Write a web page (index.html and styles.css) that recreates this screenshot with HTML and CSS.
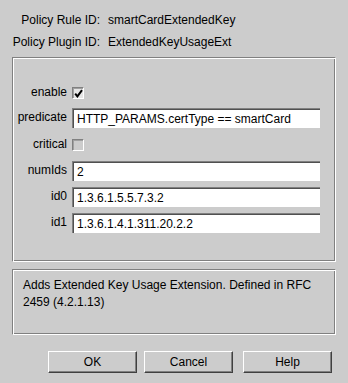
FILE: index.html
```html
<!DOCTYPE html>
<html>
<head>
<meta charset="utf-8">
<link rel="stylesheet" href="styles.css">
</head>
<body>
<div class="dialog">
  <div class="header">
    <div class="hlabel">Policy Rule ID:</div><div class="hvalue">smartCardExtendedKey</div>
    <div class="hlabel">Policy Plugin ID:</div><div class="hvalue">ExtendedKeyUsageExt</div>
  </div>
  <div class="panel form-panel">
    <div class="row r-enable"><div class="label">enable</div><div class="check checked"><svg width="9" height="9" viewBox="0 0 9 9"><path d="M1.2 4.6 L3.4 7.4 L8 1.2" fill="none" stroke="#000" stroke-width="2"/></svg></div></div>
    <div class="row r-predicate"><div class="label">predicate</div><div class="field">HTTP_PARAMS.certType == smartCard</div></div>
    <div class="row r-critical"><div class="label">critical</div><div class="check"></div></div>
    <div class="row r-numids"><div class="label">numIds</div><div class="field">2</div></div>
    <div class="row r-id0"><div class="label">id0</div><div class="field">1.3.6.1.5.5.7.3.2</div></div>
    <div class="row r-id1"><div class="label">id1</div><div class="field">1.3.6.1.4.1.311.20.2.2</div></div>
  </div>
  <div class="panel desc-panel">
    <p class="desc">Adds Extended Key Usage Extension. Defined in RFC 2459 (4.2.1.13)</p>
  </div>
  <div class="buttons">
    <div class="btn btn-ok">OK</div>
    <div class="btn btn-cancel">Cancel</div>
    <div class="btn btn-help">Help</div>
  </div>
</div>
</body>
</html>
```
FILE: styles.css
```css
html, body {
  margin: 0;
  padding: 0;
  background: #cccccc;
}
body {
  width: 348px;
  height: 383px;
  overflow: hidden;
  font-family: "Liberation Sans", Arial, sans-serif;
  font-size: 12px;
  color: #000;
}
.dialog {
  padding: 9px 0 0 12px;
  box-sizing: border-box;
}
.header {
  display: grid;
  grid-template-columns: 88px auto;
  column-gap: 8px;
  grid-auto-rows: 22px;
  align-items: center;
}
.hlabel { text-align: right; white-space: nowrap; }
.hvalue { white-space: nowrap; }

.panel {
  width: 324px;
  box-sizing: border-box;
  border-top: 1px solid #808080;
  border-left: 1px solid #808080;
  border-right: 1px solid #ffffff;
  border-bottom: 1px solid #ffffff;
  box-shadow: inset 1px 1px 0 #ffffff, inset -1px -1px 0 #808080;
}
.form-panel {
  margin-top: 4px;
  height: 205px;
  padding: 25px 0 0 1px;
}
.row {
  display: flex;
  align-items: center;
  height: 20px;
}
.label {
  width: 58px;
  text-align: right;
  padding-right: 5px;
  box-sizing: border-box;
  flex: none;
  position: relative;
  top: -1px;
}
.r-predicate { margin-top: 5px; }
.r-critical { margin-top: 7px; }
.r-numids { margin-top: 6px; }
.r-id0 { margin-top: 6px; }
.r-id1 { margin-top: 6px; }

.field {
  width: 248px;
  height: 20px;
  box-sizing: border-box;
  background: #ffffff;
  border-top: 1px solid #808080;
  border-left: 1px solid #808080;
  box-shadow: inset 1px 1px 0 #505050;
  padding: 2px 0 0 4px;
  line-height: 16px;
  white-space: nowrap;
  overflow: hidden;
}
.check {
  width: 12px;
  height: 12px;
  box-sizing: border-box;
  border-top: 1px solid #808080;
  border-left: 1px solid #808080;
  border-right: 1px solid #ffffff;
  border-bottom: 1px solid #ffffff;
  box-shadow: inset 1px 1px 0 #a0a0a0;
  background: #cccccc;
  display: flex;
  align-items: center;
  justify-content: center;
}
.check.checked { background: #e6e6e6; }
.check svg { display: block; }

.desc-panel {
  margin-top: 7px;
  height: 66px;
}
.desc {
  margin: 0;
  padding: 7px 12px 0 10px;
  line-height: 17px;
}
.buttons {
  display: flex;
  margin-top: 16px;
}
.btn {
  width: 89px;
  height: 22px;
  box-sizing: border-box;
  border-top: 1px solid #ffffff;
  border-left: 1px solid #ffffff;
  border-right: 1px solid #404040;
  border-bottom: 1px solid #404040;
  box-shadow: inset -1px -1px 0 #808080;
  display: flex;
  align-items: center;
  justify-content: center;
}
.btn-ok { margin-left: 36px; }
.btn-cancel { margin-left: 7px; }
.btn-help { margin-left: 10px; }
```
